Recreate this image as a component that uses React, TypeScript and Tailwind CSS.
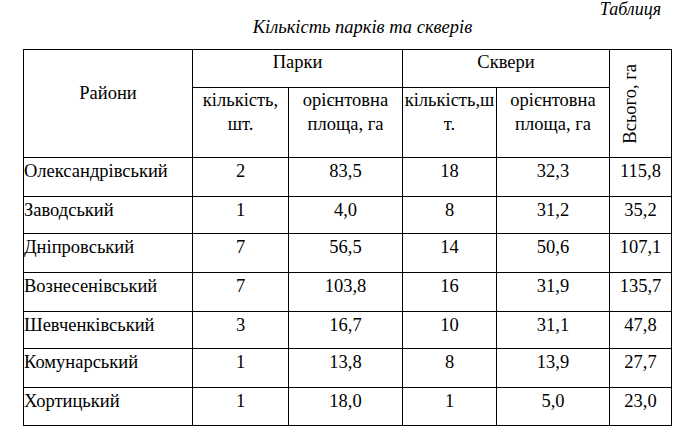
const rows = [
  { name: 'Олександрівський', p: '2', pa: '83,5', s: '18', sa: '32,3', t: '115,8', h: 'h-[39px]' },
  { name: 'Заводський', p: '1', pa: '4,0', s: '8', sa: '31,2', t: '35,2', h: 'h-[37px]' },
  { name: 'Дніпровський', p: '7', pa: '56,5', s: '14', sa: '50,6', t: '107,1', h: 'h-[39px]' },
  { name: 'Вознесенівський', p: '7', pa: '103,8', s: '16', sa: '31,9', t: '135,7', h: 'h-[39px]' },
  { name: 'Шевченківський', p: '3', pa: '16,7', s: '10', sa: '31,1', t: '47,8', h: 'h-[37px]' },
  { name: 'Комунарський', p: '1', pa: '13,8', s: '8', sa: '13,9', t: '27,7', h: 'h-[39px]' },
  { name: 'Хортицький', p: '1', pa: '18,0', s: '1', sa: '5,0', t: '23,0', h: 'h-[38px]' },
];

const cell = 'border border-black align-top p-0 leading-[24px]';

export default function App() {
  return (
    <div className="min-h-[432px] w-[687px] bg-white text-black font-['Liberation_Serif','Times_New_Roman',serif]">
      <div className="pr-[26px] text-right text-[18px] italic leading-[18px]">Таблиця</div>
      <div className="pl-[38px] text-center text-[18.5px] italic leading-[18px]">Кількість парків та скверів</div>

      <table className="ml-[23px] mt-[13px] w-[648px] table-fixed border-collapse text-[18.5px]">
        <colgroup>
          <col className="w-[169px]" />
          <col className="w-[96px]" />
          <col className="w-[114px]" />
          <col className="w-[94px]" />
          <col className="w-[113px]" />
          <col className="w-[62px]" />
        </colgroup>
        <thead>
          <tr className="h-[38px]">
            <th rowSpan={2} className={`${cell} pt-[31px] text-center font-normal`}>Райони</th>
            <th colSpan={2} className={`${cell} text-center font-normal`}>Парки</th>
            <th colSpan={2} className={`${cell} text-center font-normal`}>Сквери</th>
            <th rowSpan={2} className="border border-black p-0 align-middle font-normal">
              <div className="flex justify-center pr-[22px]">
                <span className="rotate-180 leading-[20px] [writing-mode:vertical-rl]">Всього, га</span>
              </div>
            </th>
          </tr>
          <tr className="h-[70px]">
            <th className={`${cell} text-center font-normal`}>кількість,<br />шт.</th>
            <th className={`${cell} text-center font-normal`}>орієнтовна<br />площа, га</th>
            <th className={`${cell} text-center font-normal`}>кількість,ш<br />т.</th>
            <th className={`${cell} text-center font-normal`}>орієнтовна<br />площа, га</th>
          </tr>
        </thead>
        <tbody>
          {rows.map(r => (
            <tr key={r.name} className={r.h}>
              <td className={`${cell} pt-px`}>{r.name}</td>
              <td className={`${cell} pt-px text-center`}>{r.p}</td>
              <td className={`${cell} pt-px text-center`}>{r.pa}</td>
              <td className={`${cell} pt-px text-center`}>{r.s}</td>
              <td className={`${cell} pt-px text-center`}>{r.sa}</td>
              <td className={`${cell} pt-px text-center`}>{r.t}</td>
            </tr>
          ))}
        </tbody>
      </table>
    </div>
  );
}
